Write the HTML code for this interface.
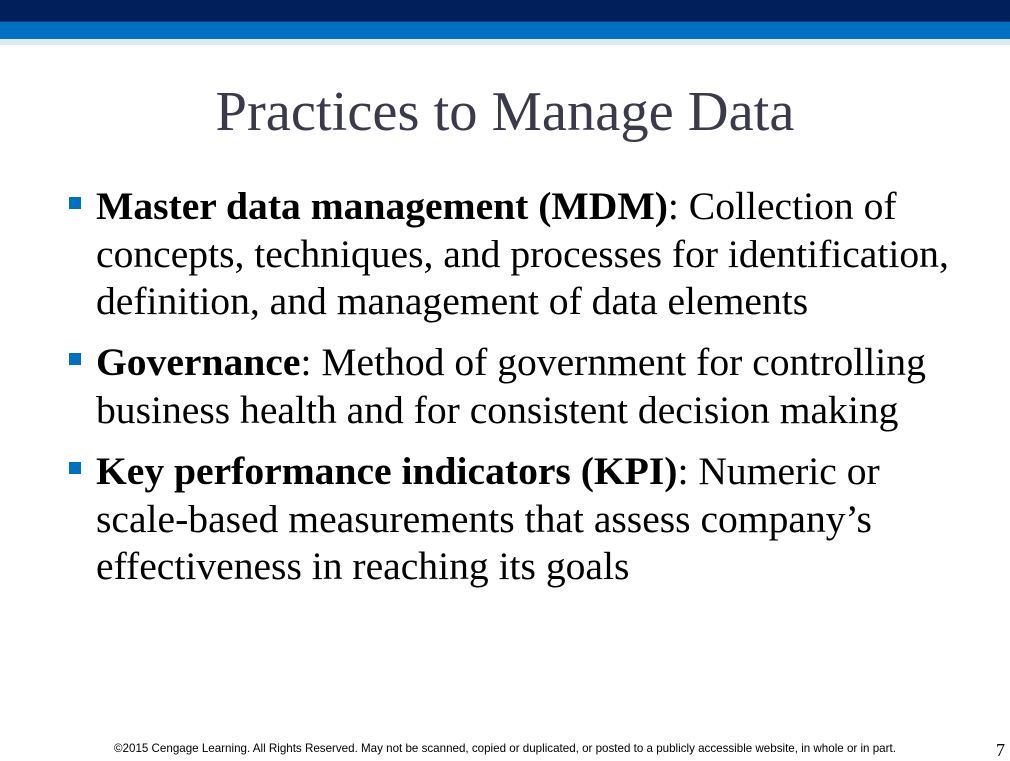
<!DOCTYPE html>
<html><head><style>
body{margin:0;width:1010px;height:760px;background:#fff;position:relative;overflow:hidden;font-family:"Liberation Serif",serif;}
.b1{position:absolute;left:0;top:0;width:1010px;height:21px;background:#001f5b;}
.b2{position:absolute;left:0;top:21px;width:1010px;height:17px;background:#0070c0;border-top:1px solid #0d3d80;}
.b3{position:absolute;left:0;top:39px;width:1010px;height:6px;background:#dfe9f0;}
h1{position:absolute;top:80px;left:0;width:1010px;text-align:center;margin:0;font-weight:normal;font-size:56.5px;color:#3a3a4a;line-height:64px;}
.item{position:absolute;left:96px;width:920px;white-space:nowrap;font-size:39.6px;line-height:47.5px;color:#000;}
.item:before{content:"";position:absolute;left:-27px;top:14px;width:12px;height:12px;background:#0070c0;}
.foot{position:absolute;top:742px;left:114px;font-family:"Liberation Sans",sans-serif;font-size:11.6px;color:#000;white-space:nowrap;}
.pg{position:absolute;top:740px;left:996px;font-size:18px;}
</style></head><body>
<div class="b1"></div><div class="b2"></div><div class="b3"></div>
<h1>Practices to Manage Data</h1>
<div class="item" style="top:183px"><b>Master data management (MDM)</b>: Collection of<br>concepts, techniques, and processes for identification,<br>definition, and management of data elements</div>
<div class="item" style="top:339px;"><b>Governance</b>: Method of government for controlling<br>business health and for consistent decision making</div>
<div class="item" style="top:448px"><b>Key performance indicators (KPI)</b>: Numeric or<br>scale-based measurements that assess company’s<br>effectiveness in reaching its goals</div>
<div class="foot">©2015 Cengage Learning. All Rights Reserved. May not be scanned, copied or duplicated, or posted to a publicly accessible website, in whole or in part.</div>
<div class="pg">7</div>
</body></html>
